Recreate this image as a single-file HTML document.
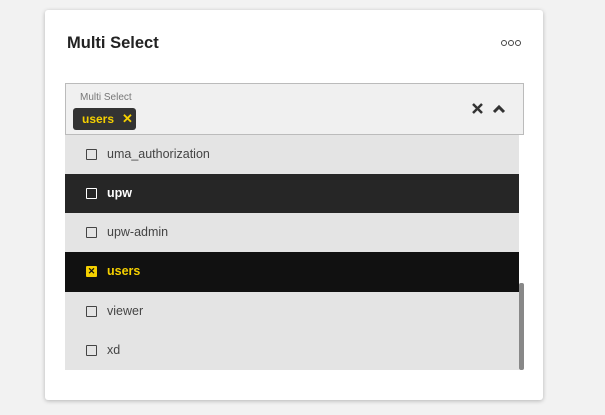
<!DOCTYPE html>
<html><head><style>
body{margin:0;width:605px;height:415px;background:#f2f2f2;font-family:"Liberation Sans",sans-serif;position:relative;overflow:hidden}
.card{position:absolute;left:45px;top:10px;width:498px;height:390px;background:#fff;border-radius:3px;box-shadow:0 1px 4px rgba(0,0,0,.25)}
.title{position:absolute;left:67px;top:34px;font-size:16.5px;font-weight:bold;color:#222}
.dots{position:absolute;left:501px;top:40px;display:flex;gap:1px}
.dots i{width:4px;height:4px;border:1.3px solid #444;border-radius:50%;display:block}
.sel{position:absolute;left:65px;top:83px;width:457px;height:50px;background:#f0f0f0;border:1px solid #bbb}
.lbl{position:absolute;left:14px;top:8px;font-size:10px;color:#777}
.chip{position:absolute;left:7px;top:24px;width:63px;height:22px;background:#333;border-radius:3px;color:#f5d000;font-weight:bold;font-size:12px;line-height:22px;padding-left:9px;box-sizing:border-box}
.chip b{position:absolute;left:49px;top:0;font-size:13px}
.row{position:absolute;left:65px;width:454px;height:39px;background:#e4e4e4;font-size:12.5px;color:#444;line-height:39px}
.row .cb{position:absolute;left:21px;top:14px;width:9px;height:9px;border:1px solid #444;border-radius:1px}
.row span{position:absolute;left:42px}
.d{background:#262626;color:#fff;font-weight:bold}
.d .cb{border-color:#fff}
.k{background:#111;color:#f5d000;font-weight:bold}
.k .cb{background:#f5d000;border-color:#f5d000;color:#111;font-size:9px;line-height:9px;text-align:center}
.sb{position:absolute;left:519px;top:283px;width:5px;height:87px;background:#888;border-radius:2px}
</style></head><body>
<div class="card"></div>
<div class="title">Multi Select</div>
<div class="dots"><i></i><i></i><i></i></div>
<div class="sel"><div class="lbl">Multi Select</div><div class="chip">users<b>✕</b></div>
<svg style="position:absolute;left:405px;top:18px" width="40" height="14"><path d="M2 2L11 11M11 2L2 11" stroke="#333" stroke-width="2.5"/><path d="M23 10L28 5L33 10" stroke="#333" stroke-width="3" fill="none"/></svg></div>
<div class="row" style="top:135px"><div class="cb"></div><span>uma_authorization</span></div>
<div class="row d" style="top:174px"><div class="cb"></div><span>upw</span></div>
<div class="row" style="top:213px"><div class="cb"></div><span>upw-admin</span></div>
<div class="row k" style="top:252px;height:40px"><div class="cb">✕</div><span>users</span></div>
<div class="row" style="top:292px"><div class="cb"></div><span>viewer</span></div>
<div class="row" style="top:331px"><div class="cb"></div><span>xd</span></div>
<div class="sb"></div>
</body></html>
